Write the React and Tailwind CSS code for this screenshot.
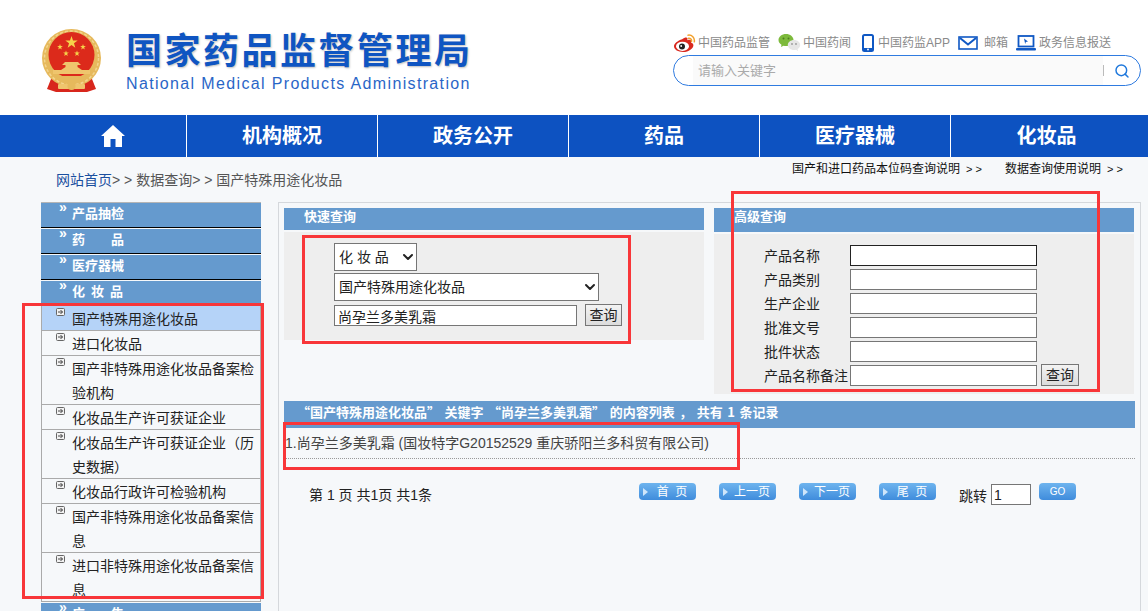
import { Search, ChevronDown } from 'lucide-react';

const sideHeaders = [
    { label: '产品抽检' },
    { label: '药　　品' },
    { label: '医疗器械' },
    { label: '化妆品', wide: true },
];

const sideItems = [
    { label: '国产特殊用途化妆品', active: true },
    { label: '进口化妆品' },
    { label: '国产非特殊用途化妆品备案检验机构' },
    { label: '化妆品生产许可获证企业' },
    { label: '化妆品生产许可获证企业（历史数据）' },
    { label: '化妆品行政许可检验机构' },
    { label: '国产非特殊用途化妆品备案信息' },
    { label: '进口非特殊用途化妆品备案信息' },
];

const navItems = ['机构概况', '政务公开', '药品', '医疗器械', '化妆品'];
const advancedRows = ['产品名称', '产品类别', '生产企业', '批准文号', '批件状态', '产品名称备注'];
const pageButtons = ['首  页', '上一页', '下一页', '尾  页'];

// five point star for the emblem
function starPoints(cx, cy, r) {
    const pts = [];
    for (let i = 0; i < 10; i++) {
        const radius = i % 2 === 0 ? r : r * 0.4;
        const angle = (Math.PI / 5) * i - Math.PI / 2;
        pts.push(`${(cx + radius * Math.cos(angle)).toFixed(2)},${(cy + radius * Math.sin(angle)).toFixed(2)}`);
    }
    return pts.join(' ');
}

function Emblem() {
    return (
        <svg width="59" height="64" viewBox="0 0 59 64">
            <path d="M9 50 L5 60 L14 63 L45 63 L54 60 L50 50 Z" fill="#d8261c" />
            <ellipse cx="29.5" cy="29" rx="29.5" ry="29" fill="#e6b95c" />
            <ellipse cx="29.5" cy="29" rx="27" ry="27" fill="none" stroke="#f3d58e" strokeWidth="1.5" strokeDasharray="3 2" />
            <ellipse cx="29.5" cy="26" rx="23" ry="23" fill="#dc2a1b" />
            <polygon points={starPoints(29.5, 13.5, 6.5)} fill="#f6d24a" />
            <polygon points={starPoints(18, 18, 3)} fill="#f6d24a" />
            <polygon points={starPoints(41, 18, 3)} fill="#f6d24a" />
            <polygon points={starPoints(24, 24.5, 3)} fill="#f6d24a" />
            <polygon points={starPoints(35, 24.5, 3)} fill="#f6d24a" />
            <path d="M23 33 L36 33 L39 36 L35.5 36 L35.5 38 L40 41 L19 41 L23.5 38 L23.5 36 L20 36 Z" fill="#efc56d" />
            <rect x="11" y="41" width="37" height="4" fill="#efc56d" />
            <path d="M14 47 L45 47 L42 52 L17 52 Z" fill="#e6b95c" />
            <rect x="16" y="55" width="27" height="5" rx="1" fill="#efc56d" />
            <circle cx="29.5" cy="57" r="4" fill="#e6b95c" />
        </svg>
    );
}

function WeiboIcon() {
    return (
        <svg width="23" height="19" viewBox="0 0 23 19">
            <path d="M9.2 5.2c2-1.7 4.6-2.4 5.2-1.2.3.7 0 1.5-.2 2.2 1.600-.6 3.400-.7 3.900.3.300.6.100 1.300-.2 1.900 1.400.4 2.500 1.300 2.500 2.800 0 3.200-4.600 6.800-10.300 6.800C5.200 18 1 15.800 1 12.300c0-2.600 3.600-5.800 8.200-7.100z" fill="#d9281e" />
            <ellipse cx="9.500" cy="12.300" rx="6.500" ry="4.600" fill="#fff" />
            <circle cx="9" cy="12.500" r="3" fill="#222" />
            <circle cx="8.200" cy="12" r=".9" fill="#fff" />
            <path d="M15 1.200c3.800-.6 7 2.600 6.300 6.600M15.500 4.200c2-.3 3.400 1.300 3 3.200" fill="none" stroke="#f2a02c" strokeWidth="1.500" strokeLinecap="round" />
        </svg>
    );
}

function WechatIcon() {
    return (
        <svg width="23" height="19" viewBox="0 0 23 19">
            <path d="M8 1C3.800 1 .5 3.700.5 7c0 2 1.200 3.700 3 4.800L3 14l2.500-1.300c.8.200 1.700.3 2.500.3 4.200 0 7.500-2.700 7.500-6S12.200 1 8 1z" fill="#7dba3c" />
            <path d="M16 7c-3.400 0-6.200 2.200-6.200 5s2.800 5 6.200 5c.7 0 1.300-.1 2-.3l2 1.200-.4-1.900c1.600-.9 2.600-2.400 2.600-4 0-2.800-2.800-5-6.200-5z" fill="#e6e6e6" />
            <circle cx="5.500" cy="5.500" r="1" fill="#4e7f1f" />
            <circle cx="10.500" cy="5.500" r="1" fill="#4e7f1f" />
            <circle cx="14" cy="11" r=".9" fill="#999" />
            <circle cx="18" cy="11" r=".9" fill="#999" />
        </svg>
    );
}

function PhoneIcon() {
    return (
        <svg width="12" height="18" viewBox="0 0 12 18">
            <rect x="1" y="1" width="10" height="16" rx="1.500" fill="#fff" stroke="#0f58c4" strokeWidth="2" />
            <rect x="1" y="14" width="10" height="3" fill="#0f58c4" />
            <circle cx="6" cy="15.500" r=".9" fill="#fff" />
        </svg>
    );
}

function MailIcon() {
    return (
        <svg width="20" height="14" viewBox="0 0 20 14">
            <rect x="1" y="1" width="18" height="12" fill="#fff" stroke="#0f58c4" strokeWidth="1.600" />
            <path d="M2 2 L10 8.500 L18 2" fill="none" stroke="#0f58c4" strokeWidth="2" />
        </svg>
    );
}

function ReportIcon() {
    return (
        <svg width="20" height="16" viewBox="0 0 20 16">
            <rect x="2.500" y="1" width="15" height="10.500" fill="#fff" stroke="#0f58c4" strokeWidth="1.800" />
            <path d="M8 3.500 L12 6.500 L9.800 7 L9.200 9 Z" fill="#0f58c4" />
            <rect x="0" y="13" width="20" height="2.500" rx="1" fill="#0f58c4" />
        </svg>
    );
}

function HomeIcon() {
    return (
        <svg width="24" height="22" viewBox="0 0 24 22" fill="#fff">
            <path d="M12 0 L24 11 L21 11 L21 22 L14.500 22 L14.500 14 L9.500 14 L9.500 22 L3 22 L3 11 L0 11 Z" />
        </svg>
    );
}

function ItemArrow() {
    return (
        <svg width="9" height="8" viewBox="0 0 9 8" className="shrink-0">
            <rect x=".5" y=".5" width="8" height="7" rx="1" fill="#f2f2f2" stroke="#666" />
            <path d="M2 4 L6.500 4 M4.500 2 L6.500 4 L4.500 6" fill="none" stroke="#333" strokeWidth=".9" />
        </svg>
    );
}

function TopLink({ icon, label, iconClass, className }) {
    return (
        <div className={`flex items-center ${className}`}>
            <div className={iconClass}>{icon}</div>
            <span className="text-xs text-[#8a8a8a] whitespace-nowrap">{label}</span>
        </div>
    );
}

function PanelTitle({ children, className }) {
    return (
        <div className={`bg-[#659ace] pl-5 text-[13px] font-bold text-white leading-[18px] ${className}`}>
            {children}
        </div>
    );
}

function QueryButton({ className }) {
    return (
        <button className={`h-[22px] border border-[#767676] bg-gradient-to-b from-[#f3f3f3] to-[#dcdcdc] text-sm text-[#222] leading-none ${className}`}>
            查询
        </button>
    );
}

function PageButton({ label }) {
    return (
        <div className="flex items-center w-[57px] h-[17px] rounded-sm bg-gradient-to-b from-[#6eb4ee] to-[#3f8cdc]">
            <span className="ml-[4px] w-0 h-0 border-y-[4px] border-y-transparent border-l-[5px] border-l-[#cfe6fb]"></span>
            <span className="flex-1 text-center text-xs text-white whitespace-pre">{label}</span>
        </div>
    );
}

// native select without the browser arrow, the chevron sits over it
function SelectBox({ label, className }) {
    return (
        <div className={`relative ${className}`}>
            <select className="block w-full h-full appearance-none border border-[#767676] bg-white pl-[4px]">
                <option>{label}</option>
            </select>
            <ChevronDown size={16} strokeWidth={3} className="absolute right-[1px] top-[6px] text-[#222] pointer-events-none" />
        </div>
    );
}

export default function App() {
    return (
        <div
            className="relative h-[611px] overflow-hidden bg-[#f6f8fa] text-[#222]"
            style={{ fontFamily: '"Liberation Sans", "Noto Sans CJK SC", sans-serif' }}
        >
            {/* Header */}
            <div className="flex h-[115px] bg-white">
                <div className="ml-[42px] mt-[29px] shrink-0"><Emblem /></div>
                <div className="ml-[25px] mt-[30px] w-[346px] shrink-0 text-[#0f55c2]">
                    <div className="text-[36px] font-bold leading-[44px] tracking-[2.5px] whitespace-nowrap [text-shadow:1px_1px_2px_rgba(0,0,0,.25)]">国家药品监督管理局</div>
                    <div className="text-base leading-[19px] tracking-[1.35px] whitespace-nowrap opacity-90">National Medical Products Administration</div>
                </div>
                <div className="ml-[201px] mt-[33px] w-[468px] shrink-0">
                    <div className="flex items-center h-[19px]">
                        <TopLink icon={<WeiboIcon />} label="中国药品监管" iconClass="w-[25px] pt-px" className="w-[105px]" />
                        <TopLink icon={<WechatIcon />} label="中国药闻" iconClass="w-[25px]" className="w-[84px]" />
                        <TopLink icon={<PhoneIcon />} label="中国药监APP" iconClass="w-[16px]" className="w-[96px]" />
                        <TopLink icon={<MailIcon />} label="邮箱" iconClass="w-[26px]" className="w-[58px]" />
                        <TopLink icon={<ReportIcon />} label="政务信息报送" iconClass="w-[23px]" />
                    </div>
                    <div className="flex items-center mt-[3px] h-[31px] rounded-full border border-[#2f7be0] pl-[19px]">
                        <div className="flex items-center flex-1 h-full bg-[#fafafa] pl-[5px] text-[13px] text-[#aaa]">请输入关键字</div>
                        <div className="w-px h-[11px] bg-[#bbb]"></div>
                        <div className="flex justify-center w-[36px]">
                            <Search size={16} strokeWidth={2.2} className="text-[#1f78dc]" />
                        </div>
                    </div>
                </div>
            </div>

            {/* Nav */}
            <div className="flex h-[42px] bg-[#0d52c1] text-white">
                <div className="flex items-center w-[187px] pl-[101px] border-r border-white shrink-0"><HomeIcon /></div>
                {navItems.map((item, index) => (
                    <div
                        key={item}
                        className={`flex items-center justify-center w-[191px] shrink-0 text-xl font-bold ${index < 4 ? 'border-r border-white' : ''}`}
                    >
                        {item}
                    </div>
                ))}
            </div>

            {/* Breadcrumb row */}
            <div className="flex justify-between h-[45px]">
                <div className="pl-[56px] pt-[13px] text-sm leading-5 text-[#555] whitespace-pre">
                    <span className="text-[#1a4f9f]">网站首页</span>{'> > 数据查询> > 国产特殊用途化妆品'}
                </div>
                <div className="flex w-[356px] pt-[4px] text-xs leading-4 text-[#111] whitespace-pre">
                    <div className="w-[213px]">国产和进口药品本位码查询说明<span className="ml-[6px] text-[11px]">{'> >'}</span></div>
                    <div>数据查询使用说明<span className="ml-[6px] text-[11px]">{'> >'}</span></div>
                </div>
            </div>

            <div className="flex items-start">
                {/* Sidebar */}
                <div className="ml-[41px] w-[220px] shrink-0 border-t border-[#b5b5b5]">
                    {sideHeaders.map((header, index) => (
                        <div
                            key={header.label}
                            className={`relative h-[25px] bg-[#659ace] text-white ${index < 3 ? 'border-b border-black mb-px' : ''}`}
                        >
                            <span className="absolute left-[18px] -top-[4px] text-sm font-bold leading-4">»</span>
                            <div className={`pl-[31px] text-[13px] font-bold leading-[22px] ${header.wide ? 'tracking-[6px]' : ''}`}>{header.label}</div>
                        </div>
                    ))}
                    <div className="border-x border-[#aaa]">
                        {sideItems.map(item => (
                            <div
                                key={item.label}
                                className={`flex items-start pl-[14px] border-b border-[#aaa] text-sm leading-6 ${item.active ? 'bg-[#b5d3f8]' : ''}`}
                            >
                                <div className="mt-[2px] mr-[7px]"><ItemArrow /></div>
                                <div className="w-[184px] pt-px -mb-px">{item.label}</div>
                            </div>
                        ))}
                    </div>
                    <div className="relative mt-px h-[25px] bg-[#659ace] text-white">
                        <span className="absolute left-[18px] -top-[4px] text-sm font-bold leading-4">»</span>
                        <div className="pl-[31px] text-[13px] font-bold leading-[22px]">广　　告</div>
                    </div>
                </div>

                {/* Main */}
                <div className="ml-[17px] w-[863px] h-[420px] shrink-0 border border-[#d5d8dc] pt-[5px] pl-[5px]">
                    <div className="flex items-start gap-[10px]">
                        <div className="w-[420px]">
                            <PanelTitle className="h-[22px]">快速查询</PanelTitle>
                            <div className="mt-[2px] h-[108px] bg-[#eeeeee] pl-[50px] pt-[11px] text-sm">
                                <SelectBox label="化 妆 品" className="w-[83px] h-[28px]" />
                                <SelectBox label="国产特殊用途化妆品" className="mt-[2px] w-[265px] h-[28px]" />
                                <div className="flex items-end mt-[3px]">
                                    <input
                                        readOnly
                                        value="尚孕兰多美乳霜"
                                        className="w-[243px] h-[21px] border border-[#767676] bg-white px-[3px] leading-none"
                                    />
                                    <QueryButton className="ml-[8px] w-[37px]" />
                                </div>
                            </div>
                        </div>
                        <div className="w-[420px]">
                            <PanelTitle className="h-[24px]">高级查询</PanelTitle>
                            <div className="mt-[2px] h-[160px] bg-[#eeeeee] pl-[50px] pt-[11px] text-sm">
                                <div className="flex flex-col gap-[3px]">
                                    {advancedRows.map((label, index) => (
                                        <div key={label} className="flex items-end h-[21px]">
                                            <div className="w-[86px] leading-5 whitespace-nowrap">{label}</div>
                                            <input
                                                readOnly
                                                className={`w-[187px] h-[21px] border bg-white ${index === 0 ? 'border-[#222]' : 'border-[#767676]'}`}
                                            />
                                            {index === 5 && <QueryButton className="ml-[4px] w-[38px]" />}
                                        </div>
                                    ))}
                                </div>
                            </div>
                        </div>
                    </div>

                    {/* Results */}
                    <div className="mt-[7px] w-[851px] h-[27px] bg-[#659ace] pl-[13px] text-[13px] font-bold leading-[22px] text-white whitespace-pre [word-spacing:1.6px] [font-family:'Noto_Sans_CJK_SC',sans-serif]">
                        “国产特殊用途化妆品” 关键字 “尚孕兰多美乳霜” 的内容列表 ， 共有 1 条记录
                    </div>
                    <div className="w-[851px] h-[31px] border-b border-dotted border-[#999] pl-px text-sm leading-[30px] text-[#444]">
                        1.尚孕兰多美乳霜 (国妆特字G20152529 重庆骄阳兰多科贸有限公司)
                    </div>
                    <div className="flex items-start pl-[25px] pt-[24px]">
                        <div className="w-[330px] pt-[2px] text-sm leading-5 whitespace-pre">第 1 页 共1页 共1条</div>
                        <div className="flex gap-[23px]">
                            {pageButtons.map(label => <PageButton key={label} label={label} />)}
                        </div>
                        <div className="ml-[23px] pt-[3px] text-sm leading-5">跳转</div>
                        <input
                            readOnly
                            value="1"
                            className="ml-[4px] mt-px w-[40px] h-[21px] border border-[#767676] bg-white px-[2px] text-sm"
                        />
                        <div className="flex items-center justify-center ml-[8px] w-[37px] h-[17px] rounded-sm bg-gradient-to-b from-[#6eb4ee] to-[#3f8cdc] text-[10px] text-white">GO</div>
                    </div>
                </div>
            </div>

            {/* Red annotation boxes drawn over the screenshot */}
            <div className="absolute left-[22px] top-[303px] w-[242px] h-[296px] border-[3px] border-[#f83639]"></div>
            <div className="absolute left-[302px] top-[235px] w-[329px] h-[109px] border-[3px] border-[#f83639]"></div>
            <div className="absolute left-[731px] top-[191px] w-[369px] h-[201px] border-[3px] border-[#f83639]"></div>
            <div className="absolute left-[283px] top-[422px] w-[457px] h-[48px] border-[3px] border-[#f83639]"></div>
        </div>
    );
}
